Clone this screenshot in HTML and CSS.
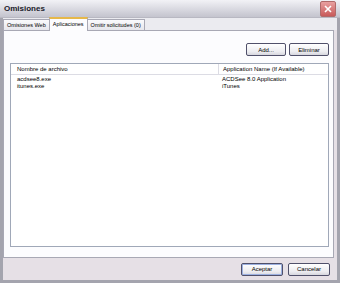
FILE: index.html
```html
<!DOCTYPE html>
<html lang="es">
<head>
  <meta charset="UTF-8">
  <title>Omisiones</title>
  <link rel="stylesheet" href="styles.css">
</head>
<body>

<div class="window">
  <div class="titlebar">
    <span class="title">Omisiones</span>
    <span class="close">
      <svg width="12" height="12" viewBox="0 0 12 12">
        <path d="M3 3 L9 9 M9 3 L3 9" stroke="#fff" stroke-width="1.6" fill="none"/>
      </svg>
    </span>
  </div>

  <div class="body">
    <div class="tabs">
      <span class="tab">Omisiones Web</span>
      <span class="tab active">Aplicaciones</span>
      <span class="tab">Omitir solicitudes (0)</span>
    </div>

    <div class="pane">
      <div class="toolbar">
        <button class="btn">Add...</button>
        <button class="btn">Eliminar</button>
      </div>
      <div class="list">
        <div class="row head">
          <span class="col1">Nombre de archivo</span>
          <span class="col2">Application Name (If Available)</span>
        </div>
        <div class="row">
          <span class="col1">acdsee8.exe</span>
          <span class="col2">ACDSee 8.0 Application</span>
        </div>
        <div class="row">
          <span class="col1">itunes.exe</span>
          <span class="col2">iTunes</span>
        </div>
      </div>
    </div>

    <div class="footer">
      <button class="btn default">Aceptar</button>
      <button class="btn">Cancelar</button>
    </div>
  </div>
</div>

</body>
</html>
```

FILE: styles.css
```css
body {
  margin: 0;
  font-family: "Liberation Sans", "DejaVu Sans", sans-serif;
  font-size: 6px;
  color: #000;
}
.window {
  width: 340px;
  height: 283px;
  box-sizing: border-box;
  border-left: 3px solid #a4a4ae;
  border-right: 3px solid #a4a4ae;
  border-bottom: 3px solid #a4a4ae;
  display: flex;
  flex-direction: column;
  background-color: #e6e0e6;
}
.titlebar {
  height: 17px;
  margin: 0 -3px;
  padding: 0 4px 0 4px;
  display: flex;
  align-items: center;
  justify-content: space-between;
  background: linear-gradient(#f2f2f6, #d6d6de 60%, #c4c4ce);
  border-bottom: 1px solid #b8b8c2;
}
.title {
  font-weight: bold;
  font-size: 8px;
  color: #1a1a2a;
}
.close {
  width: 14px;
  height: 14px;
  display: flex;
  align-items: center;
  justify-content: center;
  border-radius: 2px;
  border: 1px solid #b06a6a;
  background: linear-gradient(#e8a0a0, #c85a5a);
}
.body {
  flex: 1;
  display: flex;
  flex-direction: column;
}
.tabs {
  display: flex;
  align-items: flex-end;
  height: 12px;
  padding-left: 0;
  background-color: #ebebf0;
}
.tab {
  height: 10px;
  line-height: 10px;
  padding: 0 3px;
  font-size: 5.5px;
  border: 1px solid #a8a8b4;
  border-bottom: none;
  background: linear-gradient(#fafafc, #e6e6ec);
  margin-right: -1px;
  white-space: nowrap;
}
.tab.active {
  height: 12px;
  line-height: 11px;
  background: #fcfcfe;
  border-top: 2px solid #e6b84a;
  position: relative;
  z-index: 1;
  margin-bottom: -1px;
}
.pane {
  flex: 1;
  margin: 0 3px 0 0;
  background-color: #fcfcfe;
  border: 1px solid #a8a8b4;
  padding: 12px 4px 10px 6px;
  display: flex;
  flex-direction: column;
}
.toolbar {
  display: flex;
  justify-content: flex-end;
  gap: 3px;
  margin-bottom: 7px;
}
.btn {
  font-family: inherit;
  font-size: 6px;
  color: #000;
  width: 40px;
  height: 13px;
  padding: 0;
  border: 1px solid #50506a;
  border-radius: 2px;
  background: linear-gradient(#ffffff, #ececf0 70%, #d6d6de);
}
.btn.default {
  box-shadow: inset 0 0 0 1px #9cb0e0;
}
.list {
  flex: 1;
  border: 1px solid #a0a8b8;
  background-color: #ffffff;
}
.row {
  display: flex;
  height: 7px;
  line-height: 7px;
  white-space: nowrap;
}
.row.head {
  height: 10px;
  line-height: 10px;
  margin-bottom: 1px;
  border-bottom: 1px solid #dcdce4;
}
.col1 {
  flex: none;
  width: 201px;
  padding-left: 6px;
}
.col2 {
  padding-left: 4px;
}
.head .col1 {
  border-right: 1px solid #dcdce4;
}
.footer {
  height: 22px;
  display: flex;
  justify-content: flex-end;
  align-items: center;
  gap: 5px;
  padding-right: 7px;
}
.footer .btn {
  width: 42px;
}
```
